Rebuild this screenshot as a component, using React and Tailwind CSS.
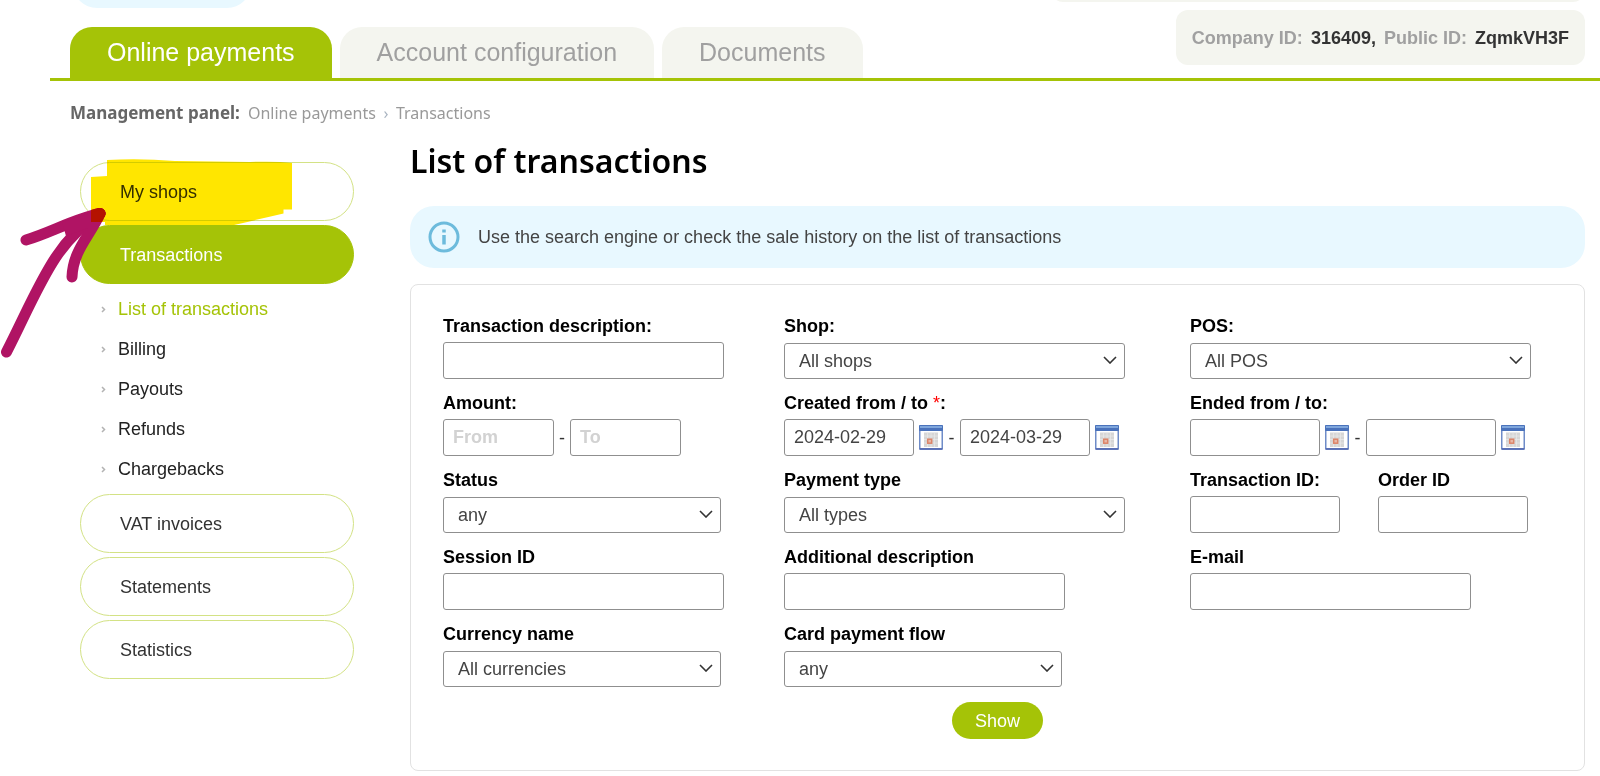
import { useState } from 'react'

const TABS = ['Online payments', 'Account configuration', 'Documents']

const SUBMENU = ['List of transactions', 'Billing', 'Payouts', 'Refunds', 'Chargebacks']

const BOX = 'border border-[#8f8f8f] rounded-[3px] bg-white text-lg text-[#444]'

function Chevron({ className }) {
  return (
    <svg viewBox="0 0 14 8" fill="none" stroke="currentColor" strokeWidth="1.6" className={className} aria-hidden="true">
      <path d="M1 1l6 6 6-6" />
    </svg>
  )
}

function Arrow() {
  return (
    <svg width="5" height="7" viewBox="0 0 5 7" fill="none" stroke="#b3b3b3" strokeWidth="1.5" className="shrink-0" aria-hidden="true">
      <path d="M1 1l2.5 2.5L1 6" />
    </svg>
  )
}

function CalendarButton({ label }) {
  return (
    <button type="button" aria-label={label} className="shrink-0">
      <svg width="24" height="25" viewBox="0 0 24 25" className="block">
        <rect x="0.75" y="0.75" width="22.5" height="23.5" rx="1" fill="#fff" stroke="#6f8cc8" strokeWidth="1.5" />
        <rect x="0" y="0" width="24" height="6" rx="1" fill="#4a72bb" />
        <rect x="1" y="1" width="22" height="2" fill="#7fa6dc" />
        <rect x="0.5" y="23" width="23" height="1.8" fill="#5a70b6" />
        <rect x="5" y="7.5" width="14" height="14.5" fill="#d6d6d6" />
        <path d="M8.5 7.500v14.500M12 7.500v14.500M15.500 7.500v14.500M5 11h14M5 14.500h14M5 18h14" stroke="#e9e9e9" strokeWidth="0.7" />
        <rect x="8.7" y="14.2" width="4" height="4" fill="#e8b7a6" stroke="#dc8468" strokeWidth="1.5" />
      </svg>
    </button>
  )
}

function Field({ id, label, children }) {
  return (
    <div>
      <label htmlFor={id} className="block h-[26px] text-lg leading-5 font-bold text-black whitespace-nowrap">{label}</label>
      <div className="h-[37px] flex items-end">{children}</div>
    </div>
  )
}

function TextBox({ id, width = 'w-[281px]', ...props }) {
  return (
    <input
      id={id}
      type="text"
      className={`h-[37px] px-[9px] placeholder:font-bold placeholder:text-[#d2d2d2] ${BOX} ${width}`}
      {...props}
    />
  )
}

function SelectBox({ id, option, width }) {
  return (
    <div className={`relative ${width}`}>
      <select id={id} className={`block w-full h-9 pl-[14px] pr-9 appearance-none ${BOX}`}>
        <option>{option}</option>
      </select>
      <Chevron className="absolute right-2 top-[13px] w-[14px] h-2 text-[#333] pointer-events-none" />
    </div>
  )
}

function DateRange({ id, from, to }) {
  return (
    <div className="flex items-center">
      <TextBox id={id} width="w-[130px]" defaultValue={from} />
      <span className="flex ml-[5px]"><CalendarButton label="Pick start date" /></span>
      <span className="w-[17px] text-center text-lg text-[#333]">-</span>
      <TextBox width="w-[130px]" defaultValue={to} aria-label="End date" />
      <span className="flex ml-[5px]"><CalendarButton label="Pick end date" /></span>
    </div>
  )
}

function MenuItem({ active, children }) {
  return (
    <a
      href="#"
      className={`flex items-center h-[59px] pl-[39px] rounded-full border text-lg ${
        active ? 'bg-[#a5c307] border-[#a5c307] text-white' : 'border-[#d3e285] text-[#333]'
      }`}
    >
      {children}
    </a>
  )
}

const MARKER = 'M107 160Q140 158 175 161L250 162Q276 161 292 163V209.500H283.500V213.500Q260 219 234 225H105V222H91V177L107 176Z'

function ArrowStrokes({ color }) {
  return (
    <g stroke={color} strokeWidth="11" strokeLinecap="round" strokeLinejoin="round">
      <path fill="none" d="M6.500 352C24 318 38 284 56 257C68 239 82 225 100 213.500" />
      <path fill="none" d="M26 240C50 233 74 219 100 213.500C90 236 73 250 72 277" />
      <path fill={color} stroke="none" d="M66 236L62 222L100 210L103 216L88 228Z" />
    </g>
  )
}

// Highlighter and hand-drawn arrow over the menu
function Annotation() {
  return (
    <>
      <svg width="360" height="370" viewBox="0 0 360 370" className="absolute left-0 top-0 mix-blend-multiply pointer-events-none" aria-hidden="true">
        <path d={MARKER} fill="#ffe600" />
      </svg>
      <svg width="360" height="370" viewBox="0 0 360 370" className="absolute left-0 top-0 pointer-events-none" aria-hidden="true">
        <clipPath id="marker">
          <path d={MARKER} />
        </clipPath>
        <ArrowStrokes color="#b01464" />
        <g clipPath="url(#marker)">
          <ArrowStrokes color="#b41200" />
        </g>
      </svg>
    </>
  )
}

export default function App() {
  const [tab, setTab] = useState(TABS[0])

  return (
    <div className="relative bg-white pb-1 font-['Liberation_Sans',Arial,sans-serif] text-[#333]">
      <header className="flex items-start justify-between h-[81px] ml-[50px] pl-5 border-b-[3px] border-[#a5c307]">
        <div>
          <div className="-mt-10 ml-[3px] w-[178px] h-12 rounded-3xl bg-[#e8f8ff]" />
          <nav className="flex gap-2 mt-[19px]">
            {TABS.map(name => (
              <button
                key={name}
                onClick={() => setTab(name)}
                className={`h-[51px] px-[37px] rounded-t-[22px] text-[25px] ${
                  tab === name ? 'bg-[#a5c307] text-white' : 'bg-[#f4f5ef] text-[#a0a0a0]'
                }`}
              >
                {name}
              </button>
            ))}
          </nav>
        </div>
        <div className="flex flex-col items-end mr-[15px]">
          <div className="-mt-10 w-[534px] h-[42px] rounded-xl bg-[#f4f5ef]" />
          <p className="mt-2 h-[55px] px-4 flex items-center gap-2 rounded-xl bg-[#f4f5ef] text-lg font-bold text-[#a0a0a0] whitespace-nowrap">
            Company ID: <span className="text-[#333]">316409,</span> Public ID: <span className="text-[#333]">ZqmkVH3F</span>
          </p>
        </div>
      </header>

      <nav className="flex items-center mt-5 ml-[70px] h-6 font-['Noto_Sans',sans-serif] text-base text-[#999]">
        <strong className="mr-2 text-[17px] text-[#666]">Management panel:</strong>
        <a href="#">Online payments</a>
        <span className="w-5 text-center text-[#a9b4c0]">›</span>
        <a href="#">Transactions</a>
      </nav>

      <div className="flex mt-4 pr-[15px]">
        <aside className="mt-[21px] ml-20 w-[274px] shrink-0 flex flex-col gap-1">
          <MenuItem>My shops</MenuItem>
          <MenuItem active>Transactions</MenuItem>
          <ul className="py-px">
            {SUBMENU.map((item, i) => (
              <li key={item}>
                <a href="#" className={`flex items-center gap-3 h-10 pl-[21px] text-lg ${i === 0 ? 'text-[#a5c307]' : 'text-[#222]'}`}>
                  <Arrow />
                  {item}
                </a>
              </li>
            ))}
          </ul>
          <MenuItem>VAT invoices</MenuItem>
          <MenuItem>Statements</MenuItem>
          <MenuItem>Statistics</MenuItem>
        </aside>

        <main className="flex-1 ml-14">
          <h1 className="h-[65px] leading-10 font-['Noto_Sans',sans-serif] text-[32px] font-semibold text-black">List of transactions</h1>

          <div className="flex items-center gap-[18px] h-[62px] pl-[18px] rounded-3xl bg-[#e8f8ff] text-lg text-[#444]">
            <svg width="32" height="32" viewBox="0 0 32 32" fill="none" stroke="#6dbbdc" strokeWidth="3" aria-hidden="true">
              <circle cx="16" cy="16" r="14" />
              <path d="M16 14v9.500" strokeWidth="3.500" />
              <path d="M16 8.500v3" strokeWidth="3.500" />
            </svg>
            Use the search engine or check the sale history on the list of transactions
          </div>

          <form onSubmit={e => e.preventDefault()} className="mt-4 px-8 py-[31px] rounded-lg border border-[#e2e2e2]">
            <div className="grid grid-cols-[341fr_406fr_362fr] gap-y-[14px]">
              <Field id="desc" label="Transaction description:"><TextBox id="desc" /></Field>
              <Field id="shop" label="Shop:"><SelectBox id="shop" option="All shops" width="w-[341px]" /></Field>
              <Field id="pos" label="POS:"><SelectBox id="pos" option="All POS" width="w-[341px]" /></Field>

              <Field id="amount" label="Amount:">
                <TextBox id="amount" width="w-[111px]" placeholder="From" />
                <span className="w-4 self-center text-center text-lg">-</span>
                <TextBox width="w-[111px]" placeholder="To" aria-label="Amount to" />
              </Field>
              <Field id="created" label={<>Created from / to <span className="font-normal text-[#ff0000]">*</span>:</>}>
                <DateRange id="created" from="2024-02-29" to="2024-03-29" />
              </Field>
              <Field id="ended" label="Ended from / to:"><DateRange id="ended" /></Field>

              <Field id="status" label="Status"><SelectBox id="status" option="any" width="w-[278px]" /></Field>
              <Field id="type" label="Payment type"><SelectBox id="type" option="All types" width="w-[341px]" /></Field>
              <div className="flex gap-[38px]">
                <Field id="tid" label="Transaction ID:"><TextBox id="tid" width="w-[150px]" /></Field>
                <Field id="oid" label="Order ID"><TextBox id="oid" width="w-[150px]" /></Field>
              </div>

              <Field id="session" label="Session ID"><TextBox id="session" /></Field>
              <Field id="extra" label="Additional description"><TextBox id="extra" /></Field>
              <Field id="email" label="E-mail"><TextBox id="email" /></Field>

              <Field id="currency" label="Currency name"><SelectBox id="currency" option="All currencies" width="w-[278px]" /></Field>
              <Field id="flow" label="Card payment flow"><SelectBox id="flow" option="any" width="w-[278px]" /></Field>
            </div>
            <button type="submit" className="block mx-auto mt-[15px] h-[37px] px-[23px] rounded-full bg-[#a5c307] text-lg text-white">Show</button>
          </form>
        </main>
      </div>

      <Annotation />
    </div>
  )
}
